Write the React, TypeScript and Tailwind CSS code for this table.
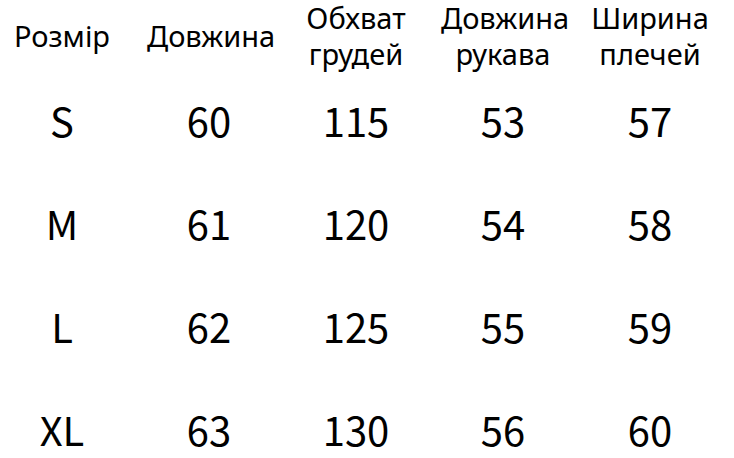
import React from 'react';

const headers = [
  ['Розмір'],
  ['Довжина'],
  ['Обхват', 'грудей'],
  ['Довжина', 'рукава'],
  ['Ширина', 'плечей'],
];

const rows = [
  ['S', '60', '115', '53', '57'],
  ['M', '61', '120', '54', '58'],
  ['L', '62', '125', '55', '59'],
  ['XL', '63', '130', '56', '60'],
];

const cols = 'grid grid-cols-[repeat(5,124px)] gap-x-[23px] items-center';

export default function App() {
  return (
    <div className="w-[734px] h-[458px] bg-white text-black overflow-hidden font-['Noto_Sans_CJK_SC',sans-serif]">
      <div className={`${cols} h-[68px] pb-[6px]`}>
        {headers.map((h, i) => (
          <div
            key={i}
            className="text-center text-[29px] leading-[36px] whitespace-nowrap font-['Noto_Sans',sans-serif]"
          >
            {h.map((line) => (
              <div key={line}>{line}</div>
            ))}
          </div>
        ))}
      </div>
      {rows.map((r) => (
        <div key={r[0]} className={`${cols} h-[103px]`}>
          {r.map((c, i) => (
            <div key={i} className="text-center text-[40px] leading-none">
              {c}
            </div>
          ))}
        </div>
      ))}
    </div>
  );
}
